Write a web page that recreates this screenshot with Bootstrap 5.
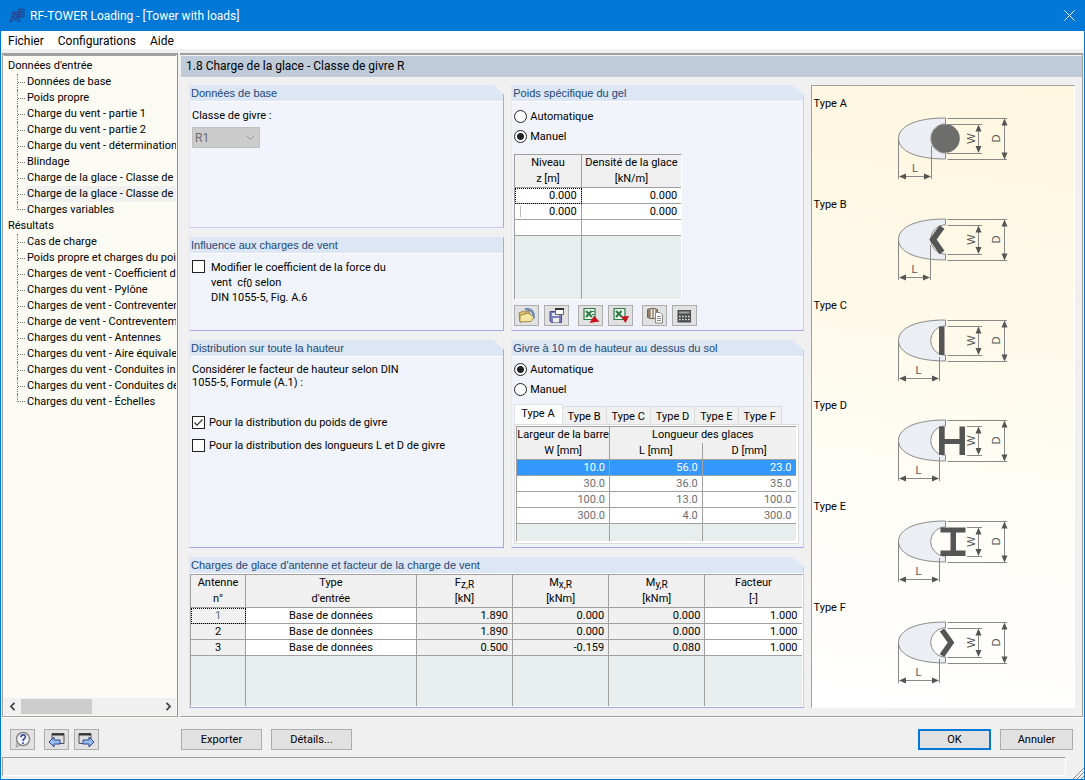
<!DOCTYPE html>
<html lang="fr">
<head>
<meta charset="utf-8">
<meta name="viewport" content="width=device-width, initial-scale=1">
<title>RF-TOWER Loading - [Tower with loads]</title>
<link href="https://cdn.jsdelivr.net/npm/bootstrap@5.3.0/dist/css/bootstrap.min.css" rel="stylesheet">
<style>
:root { --edge: #a0a0a0; --face: #f0f0f0; --blue: #0078d7; }
body { font: 11px/16px Roboto, "Liberation Sans", sans-serif; color: #000; background: var(--face); border: 1px solid var(--blue); border-top: 0; min-height: 100vh; }
.titlebar { background: var(--blue); color: #fff; height: 31px; font-size: 12px; padding: 0 9px 0 8px; }
.closer { background: none; border: 0; padding: 0; width: 12px; height: 31px; line-height: 0; }
.menubar { background: #fff; font-size: 12px; height: 18px; padding-left: 7px; gap: 14px; }
.menubar a { color: #000; text-decoration: none; line-height: 20px; }
.workspace { margin: 4px 1px 0; gap: 2px; }

.tree-pane { width: 176px; flex: none; background: #fcfbf3; border: 1px solid var(--edge); border-top: 2px solid var(--edge); border-right-color: #909090; padding: 0 1px 1px; }
.tree { list-style: none; margin: 0; padding: 2px 0 0 4px; white-space: nowrap; overflow: hidden; border-top: 1px solid var(--edge); }
.tree ul { list-style: none; margin: 0; padding: 0 0 0 9px; }
.tree a { color: #000; text-decoration: none; display: block; }
.tree ul li { display: flex; align-items: center; }
.tree ul li::before { content: ""; width: 9px; height: 16px; flex: none; border-left: 1px dotted #777; background: repeating-linear-gradient(90deg, #777 0 1px, transparent 1px 2px) 0 8px / 100% 1px no-repeat; }
.tree ul li:last-child::before { height: 8px; align-self: flex-start; background-position: 0 100%; }
.tree ul a { flex: 1; padding-left: 1px; }
.tree ul a.current { background: var(--face); }
.hscroll { background: var(--face); height: 17px; padding: 0 4px; }
.hscroll button { border: 0; background: none; padding: 0; line-height: 0; width: 8px; }
.hscroll .thumb { background: #cdcdcd; width: 71px; height: 15px; margin-left: 5px; }

.page-pane { border-top: 2px solid var(--edge); border-bottom: 1px solid var(--edge); border-right: 1px solid var(--edge); min-width: 0; }
.page-title { background: #bfcbd9; font-size: 12px; line-height: 21px; padding-left: 5px; margin: 1px 0 0 1px; font-weight: 400; }
.page-body { display: grid; grid-template-columns: minmax(0, 315fr) minmax(0, 292fr) minmax(0, 264fr); grid-template-rows: auto auto 1fr auto; gap: 9px 7px; padding: 8px 7px 8px 9px; }
.span-rows { grid-row: span 2; }
.span-cols { grid-column: 1 / span 2; }

.group-box { background: #f0f4fa; border: 1px solid #dde6f4; border-right-color: #a6a6ea; border-bottom-color: #a6a6ea; display: flex; flex-direction: column; min-width: 0; }
.group-box.cut { clip-path: polygon(0 0, calc(100% - 11px) 0, 100% 10px, 100% 100%, 0 100%); }
.group-title { font: 11px/15px "Liberation Sans", Arial, sans-serif; color: #1b4875; background: #dde6f4; padding-left: 1px; margin: 0; border-bottom: 1px solid #fff; }
.group-body { padding: 6px 4px 4px 2px; flex: 1; display: flex; flex-direction: column; }
.box-base { min-height: 142px; }
.box-wind { min-height: 94px; }
.box-dist { min-height: 208px; }
.dist-text { line-height: 13px; margin: 0 0 27px; }

.tick { display: flex; align-items: flex-start; gap: 4px; margin-bottom: 10px; }
.tick.choice { gap: 3px; margin-bottom: 7px; }
.tick.long { gap: 6px; }
.tick.long label { line-height: 15px; }
.tick input { appearance: none; width: 13px; height: 13px; margin: 0; flex: none; background: #fff; border: 1px solid #222; }
.tick input[type=radio] { border-radius: 50%; }
.tick input[type=radio]:checked { background: radial-gradient(circle, #222 0 3px, #fff 4px); }
.tick input[type=checkbox]:checked { background: #fff url("data:image/svg+xml,%3Csvg xmlns='http://www.w3.org/2000/svg' viewBox='0 0 11 11'%3E%3Cpath d='M1.5 5.5l2.5 2.7L9.5 2.5' fill='none' stroke='%23333' stroke-width='1.2'/%3E%3C/svg%3E"); }
.tick label { line-height: 13px; }
.tick sub { font-size: 10px; bottom: -1px; }
.class-select { appearance: none; width: 68px; height: 21px; margin-top: 3px; border: 1px solid #bfbfbf; background: #ccc url("data:image/svg+xml,%3Csvg xmlns='http://www.w3.org/2000/svg' width='9' height='6'%3E%3Cpath d='M.5 .5l4 4 4-4' fill='none' stroke='%23999'/%3E%3C/svg%3E") no-repeat right 4px center; color: #6d6d6d; padding: 0 2px; border-radius: 0; font-size: 12px; opacity: 1; }

.data-grid { table-layout: fixed; border-collapse: separate; border-spacing: 0; width: 100%; margin: 0; border: 1px solid var(--edge); border-right-color: #fff; border-bottom-color: #fff; background: #fff; }
.data-grid th, .data-grid td { border-right: 1px solid var(--edge); border-bottom: 1px solid var(--edge); padding: 1px 4px 0; line-height: 14px; height: 16px; text-align: right; white-space: nowrap; }
.data-grid thead th { background: var(--face); font-weight: 400; text-align: center; line-height: 16px; height: 33px; padding: 0; vertical-align: top; }
.data-grid tr > :last-child { border-right: 0; }
.data-grid thead th.upper { height: 16px; border-bottom: 0; }
.data-grid thead th.lower { height: 17px; }
.data-grid td.mid { text-align: center; }
.data-grid td.locked, .data-grid tbody th { background: var(--face); }
.data-grid tbody th { text-align: center; font-weight: 400; }
.data-grid .filler td { background: #e8eeee; border-bottom: 0; }
.data-grid .focus-cell { outline: 1px dotted #000; outline-offset: -1px; }
.data-grid sub { font-size: 10px; bottom: -2px; }
.density { width: 168px; margin: 4px 0 5px; }
.density .filler td { height: 63px; }
.density .edit-mark::before { content: ""; float: left; width: 1px; height: 11px; margin: 1px 0 0 1px; background: #bbb; }
.rime td { color: #6d6d6d; }
.rime tr.picked td { background: #3399ff; color: #fff; }
.rime .filler td { height: 17px; }
.loads .filler td { height: 50px; }

.tools { gap: 5px; }
.face-btn { background: #e1e1e1; border: 1px solid #adadad; padding: 0; height: 21px; color: #000; line-height: 19px; width: 73px; }
.face-btn.icon { width: 25px; display: flex; align-items: center; justify-content: center; }
.face-btn.wide { width: 81px; }
.face-btn.default { border: 2px solid var(--blue); line-height: 17px; }

.type-tabs { border: 0; align-items: flex-end; flex-wrap: nowrap; margin-top: 1px; }
.type-tabs .nav-link { font-size: 11px; color: #000; background: var(--face); border: 1px solid #dcdcdc; border-left-width: 0; border-bottom: 0; border-radius: 0; margin: 0; padding: 1px 5px 0; line-height: 17px; height: 18px; white-space: nowrap; }
.type-tabs .nav-link.active { background: #fff; border-left-width: 1px; padding: 0 7px 2px 6px; height: 20px; }
.tab-sheet { background: #fff; border: 1px solid #dcdcdc; padding: 1px; }

.shape-panel { grid-column: 3; grid-row: 1 / span 4; border: 1px solid #fff; border-top-color: var(--edge); border-left-color: var(--edge); background: linear-gradient(188deg, #fef6df 0%, #fefaea 40%, #fffdf7 66%, #fff 100%); padding: 10px 2px 6px; }
.shape-panel figure { flex: 1; margin: 0; min-height: 100px; }
.shape-panel figcaption { line-height: 16px; height: 16px; }
.shape-panel svg { display: block; margin: 0 auto; }
.shape-wrap { padding-left: 20px; }
svg text { font: 11px "Liberation Sans", sans-serif; fill: #555; }

.actions { padding: 11px 11px 7px 9px; border-top: 1px solid #fff; gap: 9px; }
.export { margin-left: 73px; }
.next-btn { margin-left: -4px; }
.status { height: 19px; border: 1px solid #fff; border-top-color: var(--edge); border-left-color: var(--edge); flex: 1; margin: 0 2px 0 1px; }
</style>
</head>
<body class="d-flex flex-column">

<svg width="0" height="0" class="position-absolute" aria-hidden="true">
  <defs>
    <g id="ice">
      <path d="M50.5 6C21 6 3.5 14 3.5 26.5S21 47 50.5 47V41H48A14.7 14.7 0 0 1 48 12H50.5Z" fill="#ebeff4" stroke="#8a8a8a"/>
    </g>
    <g id="dims">
      <path d="M52.5 6.5H112M52.5 47.5H112M109.500 8V46M83.500 14V39" stroke="#888" fill="none"/>
      <path d="M3.500 27V67" stroke="#888"/>
      <path d="M109.500 6.500l3 7h-6zM109.500 47.500l3-7h-6zM83.500 12.500l3 7h-6zM83.500 41l3-7h-6z" fill="#555"/>
      <text transform="translate(80 26.500) rotate(-90)" text-anchor="middle">W</text>
      <text transform="translate(105 26.500) rotate(-90)" text-anchor="middle">D</text>
    </g>
    <g id="len-long">
      <path d="M44.500 43V67M5 64.500H43" stroke="#888"/>
      <path d="M4 64.500l7-3v6zM44 64.500l-7-3v6z" fill="#555"/>
      <text x="23.500" y="59.500" text-anchor="middle">L</text>
    </g>
    <g id="len-short">
      <path d="M35.500 32V67M5 64.500H34" stroke="#888"/>
      <path d="M4 64.500l7-3v6zM35 64.500l-7-3v6z" fill="#555"/>
      <text x="19.500" y="59.500" text-anchor="middle">L</text>
    </g>
  </defs>
</svg>

<header class="titlebar d-flex align-items-center">
  <svg width="17" height="17" viewBox="0 0 17 17" class="me-1" fill="none" stroke="#2b3f86" aria-hidden="true"><path d="M1 15L4 5h4l3 10M2.500 10H10M4 5l6 6M8 5l-5 6M1 15l8-4M11 15l-7-4M9 2h6v8H10zM9 5h6M9 7.500h6M12 2v8" /></svg>
  <span class="flex-grow-1">RF-TOWER Loading - [Tower with loads]</span>
  <button class="closer" aria-label="Fermer"><svg width="11" height="11" viewBox="0 0 11 11" stroke="#fff" fill="none"><path d="M.5.500l10 10M10.500.500l-10 10"/></svg></button>
</header>

<nav class="menubar d-flex">
  <a href="#">Fichier</a>
  <a href="#">Configurations</a>
  <a href="#">Aide</a>
</nav>

<main class="workspace d-flex flex-grow-1">
  <aside class="tree-pane d-flex flex-column justify-content-between">
    <ul class="tree">
      <li><a href="#">Données d'entrée</a>
        <ul>
          <li><a href="#">Données de base</a></li>
          <li><a href="#">Poids propre</a></li>
          <li><a href="#">Charge du vent - partie 1</a></li>
          <li><a href="#">Charge du vent - partie 2</a></li>
          <li><a href="#">Charge du vent - détermination</a></li>
          <li><a href="#">Blindage</a></li>
          <li><a href="#">Charge de la glace - Classe de givre G</a></li>
          <li><a href="#" class="current">Charge de la glace - Classe de givre R</a></li>
          <li><a href="#">Charges variables</a></li>
        </ul>
      </li>
      <li><a href="#">Résultats</a>
        <ul>
          <li><a href="#">Cas de charge</a></li>
          <li><a href="#">Poids propre et charges du poids</a></li>
          <li><a href="#">Charges de vent - Coefficient de</a></li>
          <li><a href="#">Charges du vent - Pylône</a></li>
          <li><a href="#">Charges de vent - Contreventement</a></li>
          <li><a href="#">Charge de vent - Contreventement</a></li>
          <li><a href="#">Charges du vent - Antennes</a></li>
          <li><a href="#">Charges du vent - Aire équivalente</a></li>
          <li><a href="#">Charges du vent - Conduites in</a></li>
          <li><a href="#">Charges du vent - Conduites de</a></li>
          <li><a href="#">Charges du vent - Échelles</a></li>
        </ul>
      </li>
    </ul>
    <div class="hscroll d-flex align-items-center">
      <button aria-label="Défiler à gauche"><svg width="7" height="9" viewBox="0 0 7 9" fill="none" stroke="#444" stroke-width="1.800"><path d="M5.500.800L2 4.500l3.500 3.700"/></svg></button>
      <div class="thumb"></div>
      <button class="ms-auto" aria-label="Défiler à droite"><svg width="7" height="9" viewBox="0 0 7 9" fill="none" stroke="#444" stroke-width="1.800"><path d="M1.500.800L5 4.500 1.500 8.200"/></svg></button>
    </div>
  </aside>

  <section class="page-pane flex-grow-1 d-flex flex-column">
    <h1 class="page-title">1.8 Charge de la glace - Classe de givre R</h1>
    <div class="page-body flex-grow-1">

      <section class="group-box cut box-base">
        <h2 class="group-title">Données de base</h2>
        <div class="group-body">
          <label for="cls">Classe de givre :</label>
          <select id="cls" class="class-select" disabled><option>R1</option></select>
        </div>
      </section>

      <section class="group-box cut span-rows">
        <h2 class="group-title">Poids spécifique du gel</h2>
        <div class="group-body pt-2">
          <div class="tick choice"><input type="radio" name="gel" id="g1"><label for="g1">Automatique</label></div>
          <div class="tick choice"><input type="radio" name="gel" id="g2" checked><label for="g2">Manuel</label></div>
          <table class="data-grid density">
            <colgroup><col style="width:40%"><col></colgroup>
            <thead><tr><th>Niveau<br>z [m]</th><th>Densité de la glace<br>[kN/m]</th></tr></thead>
            <tbody>
              <tr><td class="focus-cell">0.000</td><td>0.000</td></tr>
              <tr><td class="edit-mark">0.000</td><td>0.000</td></tr>
              <tr><td></td><td></td></tr>
              <tr class="filler"><td></td><td></td></tr>
            </tbody>
          </table>
          <div class="d-flex tools">
            <button class="face-btn icon" aria-label="Ouvrir"><svg width="18" height="16" viewBox="0 0 18 16"><path d="M7 1.500c6-1.500 9.500 3 8.500 9" fill="none" stroke="#7089b5" stroke-width="2.500"/><path d="M1 5l4-2 2 1 4-1 2 9-11 2z" fill="#d9c16a" stroke="#8a7532" stroke-width=".8"/><path d="M2 7.500l8-2.500 6 4-3 4.500-11 .5z" fill="#f5e7a0" stroke="#8a7532" stroke-width=".8"/></svg></button>
            <button class="face-btn icon" aria-label="Enregistrer"><svg width="18" height="17" viewBox="0 0 18 17"><path d="M2 4.500h11.500v11H3.500L2 14z" fill="#7a80b8" stroke="#454c86"/><path d="M5 11h6v4.500H5z" fill="#eee"/><path d="M4 6h7v3H4z" fill="#dfe3ef"/><path d="M7.500 1.500h8v6h-8z" fill="#fff" stroke="#666"/><path d="M7 2h9" stroke="#333" stroke-width="2"/></svg></button>
            <button class="face-btn icon ms-1" aria-label="Exporter vers Excel"><svg width="18" height="17" viewBox="0 0 18 17"><path d="M2 1.500h11v11H2z" fill="#e8f2e8" stroke="#2c7a45" stroke-width="1.200"/><path d="M4 4l6 6M9.500 4L4 10" stroke="#2c7a45" stroke-width="2"/><path d="M10 4.500h2M10 7.500h2" stroke="#2c7a45"/><path d="M12 9l5.500 5.500L7.500 16z" fill="#c8141c"/></svg></button>
            <button class="face-btn icon" aria-label="Importer depuis Excel"><svg width="18" height="17" viewBox="0 0 18 17"><path d="M2 1.500h11v11H2z" fill="#e8f2e8" stroke="#2c7a45" stroke-width="1.200"/><path d="M4 4l6 6M9.500 4L4 10" stroke="#2c7a45" stroke-width="2"/><path d="M9 9.500l8-.5-3.500 7z" fill="#c8141c"/></svg></button>
            <button class="face-btn icon ms-1" aria-label="Copier"><svg width="18" height="17" viewBox="0 0 18 17"><path d="M1.500 2.500c3-1.500 7-1.500 10 0v8c-3 1.500-7 1.500-10 0z" fill="#93816b" stroke="#5d5145" stroke-width=".8"/><path d="M5.500 2v9M8.500 2v9" stroke="#eee" stroke-width="1.500"/><path d="M9.500 5.500H14l2.500 2.500v8h-7z" fill="#fff" stroke="#888"/><path d="M11 9.500h4M11 11.500h4M11 13.500h4" stroke="#888"/></svg></button>
            <button class="face-btn icon" aria-label="Calculatrice"><svg width="17" height="14" viewBox="0 0 17 14"><path d="M1.500 1H15v12.500H1.500z" fill="#4a4d4d"/><path d="M3 2.500h10.500v2H3z" fill="#9ba5a5"/><path d="M3 7.500h11M3 10.500h11" stroke="#ddd" stroke-width="1.500" stroke-dasharray="1.700 1.300"/></svg></button>
          </div>
        </div>
      </section>

      <section class="group-box box-wind">
        <h2 class="group-title">Influence aux charges de vent</h2>
        <div class="group-body">
          <div class="tick long"><input type="checkbox" id="cf"><label for="cf">Modifier le coefficient de la force du<br>vent &nbsp;c<sub>f0</sub> selon<br>DIN 1055-5, Fig. A.6</label></div>
        </div>
      </section>

      <section class="group-box cut box-dist">
        <h2 class="group-title">Distribution sur toute la hauteur</h2>
        <div class="group-body">
          <p class="dist-text">Considérer le facteur de hauteur selon DIN<br>1055-5, Formule (A.1) :</p>
          <div class="tick"><input type="checkbox" id="d1" checked><label for="d1">Pour la distribution du poids de givre</label></div>
          <div class="tick"><input type="checkbox" id="d2"><label for="d2">Pour la distribution des longueurs L et D de givre</label></div>
        </div>
      </section>

      <section class="group-box cut">
        <h2 class="group-title">Givre à 10 m de hauteur au dessus du sol</h2>
        <div class="group-body pb-0">
          <div class="tick choice"><input type="radio" name="givre" id="v1" checked><label for="v1">Automatique</label></div>
          <div class="tick choice"><input type="radio" name="givre" id="v2"><label for="v2">Manuel</label></div>
          <div class="nav nav-tabs type-tabs" role="tablist">
            <button class="nav-link active" role="tab">Type A</button>
            <button class="nav-link" role="tab">Type B</button>
            <button class="nav-link" role="tab">Type C</button>
            <button class="nav-link" role="tab">Type D</button>
            <button class="nav-link" role="tab">Type E</button>
            <button class="nav-link" role="tab">Type F</button>
          </div>
          <div class="tab-sheet">
            <table class="data-grid rime">
              <thead>
                <tr><th class="upper">Largeur de la barre</th><th class="upper" colspan="2">Longueur des glaces</th></tr>
                <tr><th class="lower">W [mm]</th><th class="lower">L [mm]</th><th class="lower">D [mm]</th></tr>
              </thead>
              <tbody>
                <tr class="picked"><td>10.0</td><td>56.0</td><td>23.0</td></tr>
                <tr><td>30.0</td><td>36.0</td><td>35.0</td></tr>
                <tr><td>100.0</td><td>13.0</td><td>100.0</td></tr>
                <tr><td>300.0</td><td>4.0</td><td>300.0</td></tr>
                <tr class="filler"><td></td><td></td><td></td></tr>
              </tbody>
            </table>
          </div>
        </div>
      </section>

      <section class="group-box cut span-cols">
        <h2 class="group-title">Charges de glace d'antenne et facteur de la charge de vent</h2>
        <table class="data-grid loads">
          <colgroup><col style="width:9%"><col style="width:28%"><col><col><col><col></colgroup>
          <thead><tr><th>Antenne<br>n°</th><th>Type<br>d'entrée</th><th>F<sub>z,R</sub><br>[kN]</th><th>M<sub>x,R</sub><br>[kNm]</th><th>M<sub>y,R</sub><br>[kNm]</th><th>Facteur<br>[-]</th></tr></thead>
          <tbody>
            <tr><th class="focus-cell text-secondary">1</th><td class="mid">Base de données</td><td class="locked">1.890</td><td class="locked">0.000</td><td class="locked">0.000</td><td>1.000</td></tr>
            <tr><th>2</th><td class="mid">Base de données</td><td class="locked">1.890</td><td class="locked">0.000</td><td class="locked">0.000</td><td>1.000</td></tr>
            <tr><th>3</th><td class="mid">Base de données</td><td class="locked">0.500</td><td class="locked">-0.159</td><td class="locked">0.080</td><td>1.000</td></tr>
            <tr class="filler"><td></td><td></td><td></td><td></td><td></td><td></td></tr>
          </tbody>
        </table>
      </section>

      <aside class="shape-panel d-flex flex-column">
        <figure><figcaption>Type A</figcaption><div class="shape-wrap"><svg width="116" height="72"><use href="#ice"/><use href="#dims"/><circle cx="50.500" cy="26.500" r="14.300" fill="#6d6e6c"/><path d="M36.500 34V67M5 64.500H35" stroke="#888"/><path d="M52 12.500H87M52 41.500H87" stroke="#888"/><path d="M4 64.500l7-3v6zM36 64.500l-7-3v6z" fill="#555"/><text x="20" y="59.500" text-anchor="middle">L</text></svg></div></figure>
        <figure><figcaption>Type B</figcaption><div class="shape-wrap"><svg width="116" height="72"><use href="#ice"/><use href="#dims"/><use href="#len-short"/><path d="M52.500 12.500H87M52.500 41.500H87" stroke="#888"/><path d="M47 14L38 26.500 47 39.500" fill="none" stroke="#555" stroke-width="6"/></svg></div></figure>
        <figure><figcaption>Type C</figcaption><div class="shape-wrap"><svg width="116" height="72"><use href="#ice"/><use href="#dims"/><use href="#len-long"/><path d="M52.500 12.500H87M52.500 41.500H87" stroke="#888"/><path d="M44 12.500h5.500V41H44z" fill="#555"/></svg></div></figure>
        <figure><figcaption>Type D</figcaption><div class="shape-wrap"><svg width="116" height="72"><use href="#ice"/><use href="#dims"/><use href="#len-long"/><path d="M72 12.500H87M72 41.500H87" stroke="#888"/><path d="M44 12.500h5.700V25h14.800V12.500H70V41h-5.500V30H49.700V41H44z" fill="#555"/></svg></div></figure>
        <figure><figcaption>Type E</figcaption><div class="shape-wrap"><svg width="116" height="72"><use href="#ice"/><use href="#dims"/><use href="#len-long"/><path d="M72 12.500H87M72 41.500H87" stroke="#888"/><path d="M45.500 12.500H70.500v5H61V35.500h9.500v5.500h-25v-5.500h10V17.500h-10z" fill="#555"/></svg></div></figure>
        <figure><figcaption>Type F</figcaption><div class="shape-wrap"><svg width="116" height="72"><use href="#ice"/><use href="#dims"/><use href="#len-long"/><path d="M52.500 12.500H87M52.500 41.500H87" stroke="#888"/><path d="M47 14l9 12.500L47 39.500" fill="none" stroke="#555" stroke-width="5.500"/></svg></div></figure>
      </aside>
    </div>
  </section>
</main>

<footer>
  <div class="actions d-flex">
    <button class="face-btn icon" aria-label="Aide"><svg width="17" height="17" viewBox="0 0 17 17"><path d="M3 12l-1 4 5-2" fill="#ddd" stroke="#888" stroke-width=".8"/><circle cx="9" cy="8" r="6.500" fill="#f4f4f8" stroke="#888" stroke-width="1.500"/><path d="M7 6.200c0-3 4.500-3 4.300-.2C11.200 8 9 8 9 10M9 11.300v1.700" fill="none" stroke="#34509c" stroke-width="1.700"/></svg></button>
    <button class="face-btn icon" aria-label="Fenêtre précédente"><svg width="17" height="16" viewBox="0 0 17 16"><path d="M4 1.500h12v10H4z" fill="#ddd" stroke="#555"/><path d="M4 2.500h12" stroke="#333" stroke-width="2"/><path d="M1 10l5-5v3h6v4H6v3z" fill="#9bbcf2" stroke="#27488f"/></svg></button>
    <button class="face-btn icon next-btn" aria-label="Fenêtre suivante"><svg width="17" height="16" viewBox="0 0 17 16"><path d="M1 1.500h12v10H1z" fill="#ddd" stroke="#555"/><path d="M1 2.500h12" stroke="#333" stroke-width="2"/><path d="M16 10l-5-5v3H5v4h6v3z" fill="#9bbcf2" stroke="#27488f"/></svg></button>
    <button class="face-btn wide export">Exporter</button>
    <button class="face-btn wide">Détails...</button>
    <button class="face-btn default ms-auto">OK</button>
    <button class="face-btn">Annuler</button>
  </div>
  <div class="d-flex">
    <div class="status"></div>
    <svg width="16" height="22" viewBox="0 0 16 22" stroke="#888" fill="none" aria-hidden="true"><path d="M5 22L16 11M9 22l7-7M13 22l3-3"/></svg>
  </div>
</footer>

<script src="https://cdn.jsdelivr.net/npm/bootstrap@5.3.0/dist/js/bootstrap.bundle.min.js"></script>
</body>
</html>
